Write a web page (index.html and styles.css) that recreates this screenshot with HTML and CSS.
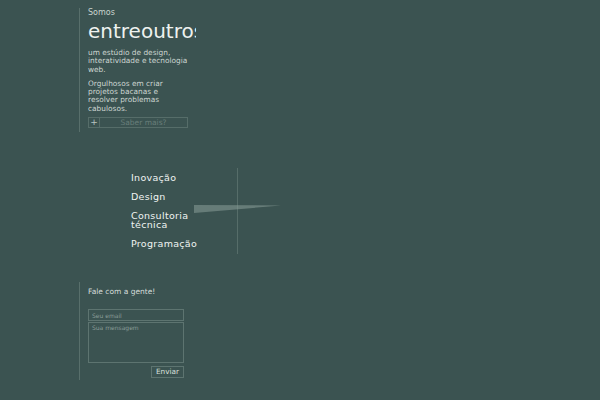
FILE: index.html
```html
<!DOCTYPE html>
<html>
<head>
<meta charset="utf-8">
<link rel="stylesheet" href="styles.css">
</head>
<body>
<div class="page">
  <section class="intro">
    <div class="somos">Somos</div>
    <h1 class="brand">entreoutros</h1>
    <p class="txt">um estúdio de design, interatividade e tecnologia web.</p>
    <p class="txt">Orgulhosos em criar projetos bacanas e resolver problemas cabulosos.</p>
    <div class="more"><span class="plus">+</span><span class="more-label">Saber mais?</span></div>
  </section>

  <section class="services">
    <ul class="menu">
      <li>Inovação</li>
      <li>Design</li>
      <li>Consultoria<br>técnica</li>
      <li>Programação</li>
    </ul>
    <div class="divider"></div>
    <svg class="ray" width="88" height="10" viewBox="0 0 88 10"><polygon points="0,1 87,1.5 0,9" fill="#8a9e99" fill-opacity="0.55"/></svg>
  </section>

  <section class="contact">
    <div class="fale">Fale com a gente!</div>
    <form class="form">
      <input class="email" type="text" placeholder="Seu email">
      <textarea class="msg" placeholder="Sua mensagem"></textarea>
      <div class="actions"><button class="send" type="button">Enviar</button></div>
    </form>
  </section>
</div>
</body>
</html>
```

FILE: styles.css
```css
html, body {
  margin: 0;
  padding: 0;
  background: #3b5351;
  height: 100%;
}
body {
  font-family: "DejaVu Sans", sans-serif;
  color: #d8e0dc;
}
.page {
  padding-left: 79px;
  padding-top: 8px;
}
.intro {
  border-left: 1px solid #586f6b;
  width: 108px;
  padding-left: 8px;
  padding-bottom: 4px;
  overflow: hidden;
}
.somos {
  font-size: 8px;
  line-height: 10px;
  color: #c9d3cf;
}
.brand {
  margin: 0;
  font-weight: normal;
  font-size: 20px;
  line-height: 26px;
  white-space: nowrap;
  color: #eef2ef;
  margin-bottom: 5px;
}
.txt {
  margin: 0 0 6px 0;
  font-size: 7.4px;
  line-height: 8.3px;
  color: #cdd6d2;
  width: 100px;
}
.txt:last-of-type {
  margin-bottom: 4px;
}
.more {
  display: flex;
  height: 11px;
  width: 100px;
  border: 1px solid #566d69;
  box-sizing: border-box;
}
.plus {
  width: 10px;
  border-right: 1px solid #566d69;
  font-size: 9px;
  line-height: 9px;
  text-align: center;
  color: #b8c4c0;
}
.more-label {
  flex: 1;
  text-align: center;
  font-size: 7.5px;
  line-height: 9px;
  color: #687e7a;
}
.services {
  position: relative;
  display: flex;
  margin-top: 36px;
  margin-left: 52px;
  height: 86px;
}
.menu {
  list-style: none;
  margin: 0;
  padding: 5px 0 0 0;
  width: 106px;
  font-size: 9.5px;
  line-height: 9px;
  color: #f0f3f1;
  letter-spacing: 0.3px;
}
.menu li {
  margin-bottom: 10px;
}
.divider {
  width: 1px;
  background: #566d69;
  height: 86px;
}
.ray {
  position: absolute;
  left: 63px;
  top: 36px;
}
.contact {
  margin-top: 28px;
  border-left: 1px solid #586f6b;
  padding-left: 8px;
  padding-top: 5px;
  height: 93px;
  width: 96px;
}
.fale {
  font-size: 7.5px;
  line-height: 10px;
  color: #d5ddd9;
}
.form {
  margin: 12px 0 0 0;
  display: flex;
  flex-direction: column;
}
.email, .msg {
  background: transparent;
  border: 1px solid #5d7470;
  color: #aab;
  font-family: "DejaVu Sans", sans-serif;
  font-size: 6px;
  padding: 1px 3px;
  box-sizing: border-box;
  width: 96px;
  outline: none;
  margin: 0;
}
.email {
  height: 12px;
}
.msg {
  margin-top: 1px;
  height: 41px;
  resize: none;
}
.email::placeholder, .msg::placeholder {
  color: #8a9c98;
}
.actions {
  display: flex;
  justify-content: flex-end;
  margin-top: 3px;
}
.send {
  background: transparent;
  border: 1px solid #5d7470;
  color: #d8e0dc;
  font-family: "DejaVu Sans", sans-serif;
  font-size: 7.3px;
  height: 12px;
  padding: 0 4px;
  line-height: 10px;
  margin: 0;
}
```
